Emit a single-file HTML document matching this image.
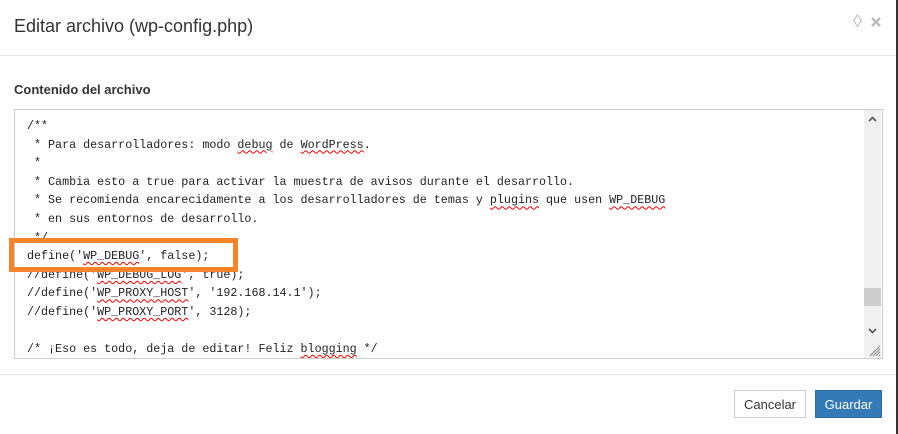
<!DOCTYPE html>
<html><head><meta charset="utf-8"><style>
body{margin:0;width:898px;height:434px;background:#fff;position:relative;overflow:hidden;font-family:"Liberation Sans",sans-serif;}
.t{position:absolute;left:14px;top:16px;font-size:18px;color:#333;}
.hd{position:absolute;left:0;top:55px;width:896px;height:1px;background:#e5e5e5;}
.ft{position:absolute;left:0;top:374px;width:896px;height:1px;background:#e5e5e5;}
.edge{position:absolute;right:0;top:0;width:2px;height:434px;background:#333;}
.lbl{position:absolute;left:14px;top:82px;font-size:13px;font-weight:bold;color:#333;}
.ta{position:absolute;left:14px;top:109px;width:867px;height:248px;border:1px solid #ccc;overflow:hidden;}
.code{position:absolute;left:12px;top:7px;font-family:"Liberation Mono",monospace;font-size:11.7px;line-height:18.6px;color:#222;white-space:pre;}
.s{text-decoration:underline wavy #e00;text-decoration-thickness:1px;text-underline-offset:2px;}
.sb{position:absolute;left:849px;top:0;width:17px;height:248px;background:#f0f0f0;}
.th{position:absolute;left:0;top:178px;width:17px;height:18px;background:#cdcdcd;}
.box{position:absolute;left:9px;top:238px;width:219px;height:24px;border:5px solid #f5842a;}
.ic{position:absolute;top:11px;color:#bbb;font-size:18px;}
.btn{position:absolute;top:390px;height:28px;font-size:13px;line-height:28px;text-align:center;box-sizing:border-box;}
</style></head><body>
<div class="t">Editar archivo (wp-config.php)</div>
<div class="ic" style="left:853px;">&#9674;</div>
<svg style="position:absolute;left:871px;top:17px" width="10" height="10"><path d="M1 1L9 9M9 1L1 9" stroke="#bbb" stroke-width="2.4"/></svg>
<div class="hd"></div>
<div class="lbl">Contenido del archivo</div>
<div class="ta">
<div class="code">/**
 * Para desarrolladores: modo <span class="s">debug</span> de <span class="s">WordPress</span>.
 *
 * Cambia esto a true para activar la muestra de avisos durante el desarrollo.
 * Se recomienda encarecidamente a los desarrolladores de temas y <span class="s">plugins</span> que usen <span class="s">WP_DEBUG</span>
 * en sus entornos de desarrollo.
 */
define('<span class="s">WP_DEBUG</span>', false);
//define('<span class="s">WP_DEBUG_LOG</span>', true);
//define('<span class="s">WP_PROXY_HOST</span>', '192.168.14.1');
//define('<span class="s">WP_PROXY_PORT</span>', 3128);

/* ¡Eso es todo, deja de editar! Feliz <span class="s">blogging</span> */</div>
<div class="sb"><div class="th"></div>
<svg style="position:absolute;left:4px;top:6px" width="9" height="6"><path d="M1 5L4.5 1.5L8 5" stroke="#555" stroke-width="1.6" fill="none"/></svg>
<svg style="position:absolute;left:4px;top:218px" width="9" height="6"><path d="M1 1L4.5 4.5L8 1" stroke="#555" stroke-width="1.6" fill="none"/></svg>
</div>
<svg style="position:absolute;left:853px;top:234px" width="13" height="13"><path d="M12 2L2 12M12 5L5 12M12 8L8 12M12 11L11 12" stroke="#888" stroke-width="1"/></svg>
</div>
<div class="box"></div>
<div class="ft"></div>
<div class="btn" style="left:734px;width:72px;border:1px solid #ccc;color:#333;">Cancelar</div>
<div class="btn" style="left:815px;width:67px;background:#337ab7;border:1px solid #2e6da4;color:#fff;">Guardar</div>
<div class="edge"></div>
</body></html>
